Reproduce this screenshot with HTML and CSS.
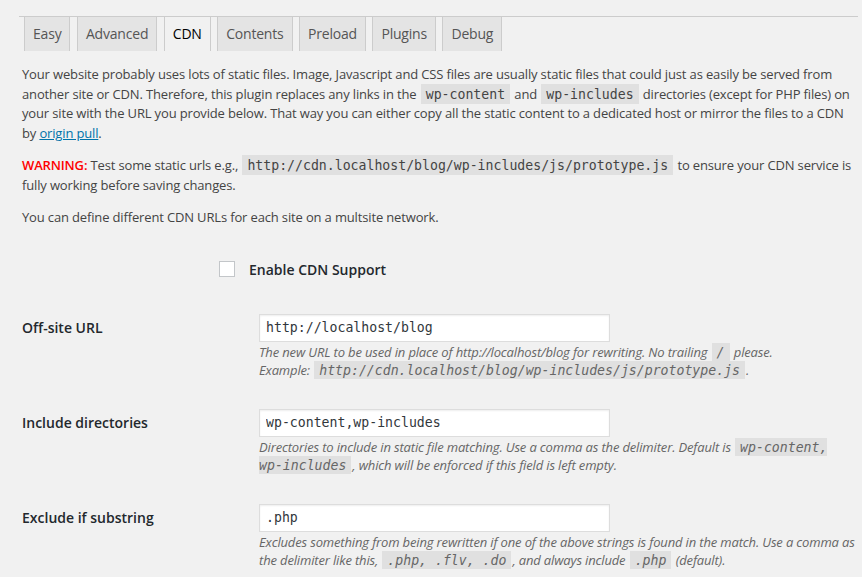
FILE: index.html
```html
<!DOCTYPE html>
<html lang="en">
<head>
    <meta charset="UTF-8">
    <title>CDN Settings</title>
    <link rel="stylesheet" href="styles.css">
</head>
<body>
    <div class="wrap">
        <nav class="nav-tabs">
            <a class="nav-tab" href="#">Easy</a>
            <a class="nav-tab" href="#">Advanced</a>
            <a class="nav-tab active" href="#">CDN</a>
            <a class="nav-tab" href="#">Contents</a>
            <a class="nav-tab" href="#">Preload</a>
            <a class="nav-tab" href="#">Plugins</a>
            <a class="nav-tab" href="#">Debug</a>
        </nav>

        <p>Your website probably uses lots of static files. Image, Javascript and CSS files are usually static files that could just as easily be served from another site or CDN. Therefore, this plugin replaces any links in the <code>wp-content</code> and <code>wp-includes</code> directories (except for PHP files) on your site with the URL you provide below. That way you can either copy all the static content to a dedicated host or mirror the files to a CDN by <a href="#">origin pull</a>.</p>
        <p><strong class="warning">WARNING:</strong> Test some static urls e.g., <code>http://cdn.localhost/blog/wp-includes/js/prototype.js</code> to ensure your CDN service is fully working before saving changes.</p>
        <p>You can define different CDN URLs for each site on a multsite network.</p>

        <label class="enable">
            <input type="checkbox" class="check">
            <span>Enable CDN Support</span>
        </label>

        <div class="form-table">
            <div class="row">
                <div class="label">Off-site URL</div>
                <div class="field">
                    <input type="text" class="regular-text" value="http://localhost/blog">
                    <p class="description">The new URL to be used in place of http://localhost/blog for rewriting. No trailing <code>/</code> please.<br>Example: <code>http://cdn.localhost/blog/wp-includes/js/prototype.js</code>.</p>
                </div>
            </div>
            <div class="row">
                <div class="label">Include directories</div>
                <div class="field">
                    <input type="text" class="regular-text" value="wp-content,wp-includes">
                    <p class="description">Directories to include in static file matching. Use a comma as the delimiter. Default is <code>wp-content, wp-includes</code>, which will be enforced if this field is left empty.</p>
                </div>
            </div>
            <div class="row">
                <div class="label">Exclude if substring</div>
                <div class="field">
                    <input type="text" class="regular-text" value=".php">
                    <p class="description">Excludes something from being rewritten if one of the above strings is found in the match. Use a comma as the delimiter like this, <code>.php, .flv, .do</code>, and always include <code>.php</code> (default).</p>
                </div>
            </div>
        </div>
    </div>
</body>
</html>
```

FILE: styles.css
```css
html {
    overflow: hidden;
}

body {
    margin: 0;
    background-color: #f1f1f1;
    color: #444;
    font-family: "Open Sans", sans-serif;
    font-size: 13px;
    line-height: 1.5;
    letter-spacing: -0.15px;
}

.wrap {
    padding: 16px 4px 0 19px;
}

/* tab strip */
.nav-tabs {
    display: flex;
    border-top: 1px solid #ccc;
    padding-left: 5px;
}

.nav-tab {
    display: block;
    margin-right: 6.5px;
    padding: 5px 8px;
    border: 1px solid #ccc;
    border-top: none;
    border-bottom: none;
    background-color: #e4e4e4;
    color: #555;
    font-size: 14px;
    font-weight: 400;
    line-height: 24px;
    letter-spacing: -0.2px;
    text-decoration: none;
}

.nav-tab.active {
    background-color: #f1f1f1;
    color: #000;
}

p {
    margin: 13px 0;
    padding-left: 3px;
}

.nav-tabs + p {
    margin-top: 14px;
}

a {
    color: #0073aa;
}

.warning {
    color: #f00;
    font-weight: 600;
}

code {
    padding: 3px 5px 2px;
    margin: 0 1px;
    background: rgba(0, 0, 0, 0.07);
    font-family: "DejaVu Sans Mono", monospace;
    font-size: 13.2px;
    line-height: 1;
    letter-spacing: 0;
}

/* enable checkbox */
.enable {
    display: flex;
    align-items: center;
    gap: 14px;
    margin: 33px 0 0 200px;
    color: #23282d;
    font-size: 14px;
    font-weight: 600;
    line-height: 17px;
    letter-spacing: 0;
}

.check {
    appearance: none;
    -webkit-appearance: none;
    width: 16px;
    height: 16px;
    margin: 0;
    border: 1px solid #c3c6c9;
    background: #fff;
}

/* settings rows */
.form-table {
    margin-top: 36px;
    padding-left: 3px;
}

.row {
    display: grid;
    grid-template-columns: 237px 1fr;
    margin-bottom: 30px;
}

.label {
    color: #23282d;
    font-size: 14px;
    font-weight: 600;
    line-height: 27px;
    letter-spacing: 0;
}

.regular-text {
    box-sizing: border-box;
    display: block;
    width: 351px;
    height: 28px;
    margin: 0;
    padding: 0 6px;
    border: 1px solid #ddd;
    background: #fff;
    box-shadow: inset 0 1px 2px rgba(0, 0, 0, 0.07);
    color: #32373c;
    font-family: "DejaVu Sans Mono", monospace;
    font-size: 13.2px;
}

.description {
    margin: 1px 0 0;
    padding: 0;
    color: #666;
    font-style: italic;
    line-height: 18px;
}

.description code {
    padding: 2px 5px 1px;
}
```
